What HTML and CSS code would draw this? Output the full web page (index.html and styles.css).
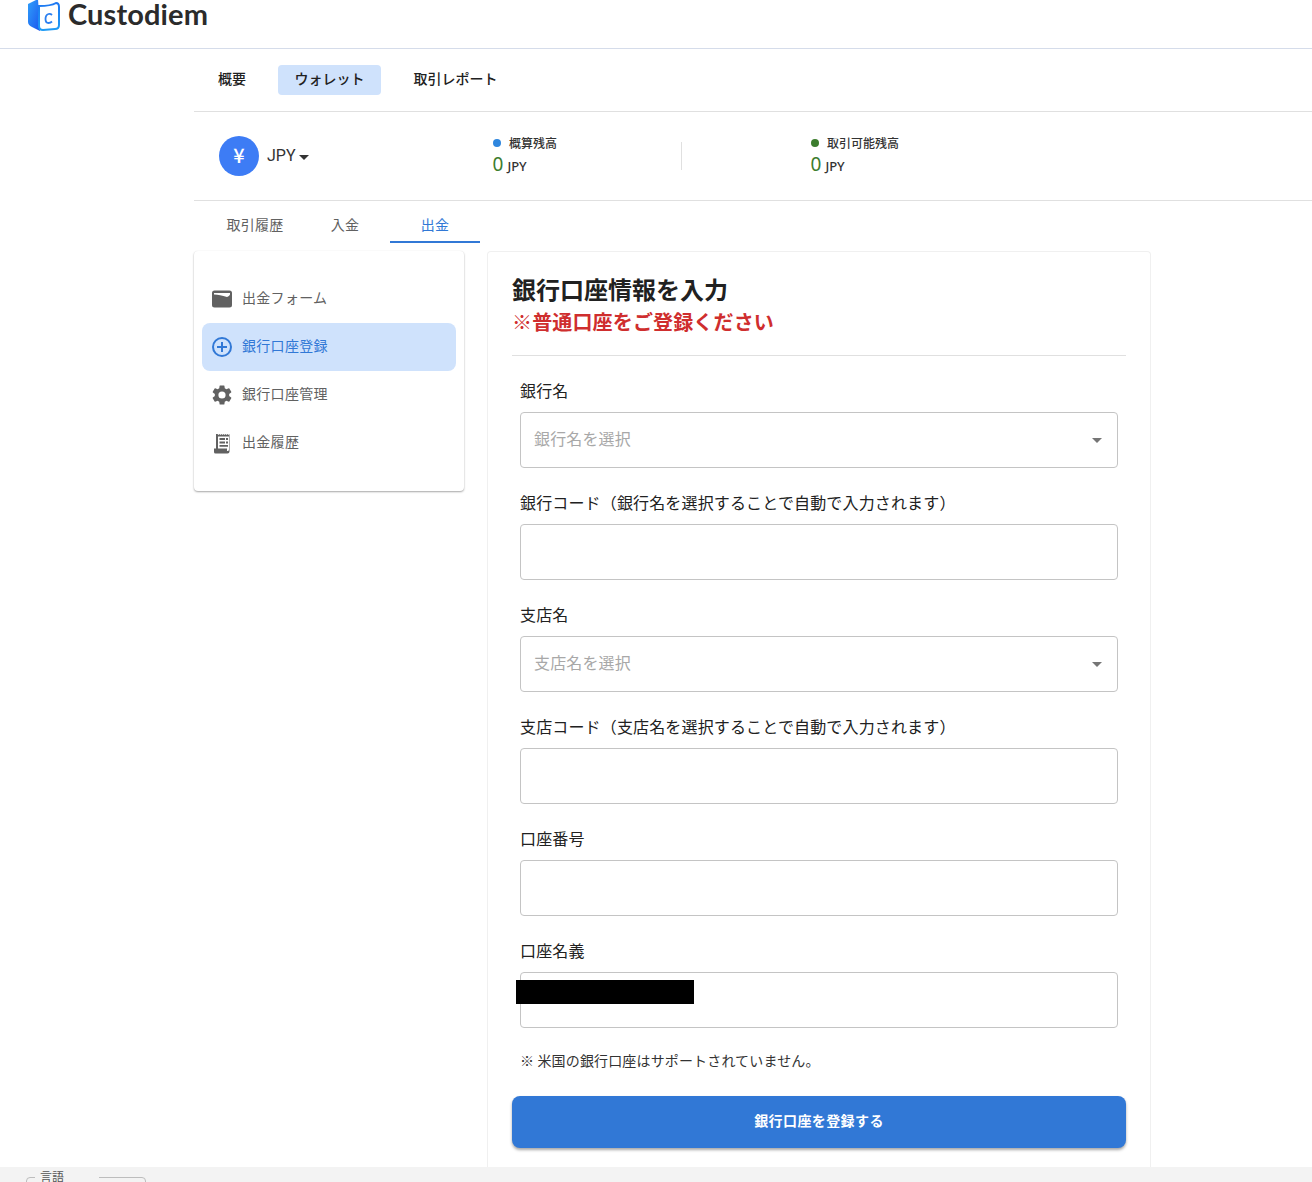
FILE: index.html
```html
<!DOCTYPE html>
<html lang="ja">
<head>
<meta charset="utf-8">
<title>Custodiem</title>
<link rel="stylesheet" href="styles.css">
</head>
<body>
<div class="page">
  <header class="topbar">
    <svg class="logo-icon" width="34" height="36" viewBox="0 0 34 36">
      <defs>
        <linearGradient id="lg" x1="0" y1="0" x2="1" y2="1"><stop offset="0" stop-color="#2fa0fa"/><stop offset="1" stop-color="#1c55ee"/></linearGradient>
        <linearGradient id="lh" x1="0" y1="0" x2="0" y2="1"><stop offset="0" stop-color="#1e78f2"/><stop offset="1" stop-color="#1d9bf5"/></linearGradient>
      </defs>
      <path d="M1 8 L11 3 L13 35 L5 31 Q1 29 1 26 Z" fill="url(#lg)"/>
      <path d="M12 10 Q24 10 29 7 Q32 7 32 11 L32 29 Q32 33 28 33 L16 34 Q12 34 12 30 Z" fill="#fff" stroke="url(#lh)" stroke-width="2"/>
      <path d="M25 19 Q23.500 17.500 21.500 18 Q18.500 19 18.500 23 Q18.500 27 21.500 27 Q23.500 27 25 25.500" fill="none" stroke="#2b7ff0" stroke-width="1.800"/>
    </svg>
    <span class="logo-text">Custodiem</span>
  </header>
  <main class="content">
    <nav class="mainnav">
      <a class="mainnav-item">概要</a>
      <a class="mainnav-item active">ウォレット</a>
      <a class="mainnav-item">取引レポート</a>
    </nav>
    <section class="balance">
      <div class="currency">
        <span class="coin">¥</span>
        <span class="code">JPY</span>
        <span class="caret"></span>
      </div>
      <div class="stat first">
        <div class="stat-label"><i class="dot blue"></i>概算残高</div>
        <div class="stat-value"><b>0</b><span>JPY</span></div>
      </div>
      <div class="stat second">
        <div class="stat-label"><i class="dot green"></i>取引可能残高</div>
        <div class="stat-value"><b>0</b><span>JPY</span></div>
      </div>
    </section>
    <nav class="tabs">
      <a class="tab">取引履歴</a>
      <a class="tab">入金</a>
      <a class="tab active">出金</a>
    </nav>
    <div class="columns">
      <aside class="side">
        <a class="side-item">
          <svg viewBox="0 0 24 24" width="24" height="24"><path fill="#616161" fill-rule="evenodd" d="M4.500 3.500h15A2.500 2.500 0 0 1 22 6v12a2.500 2.500 0 0 1-2.500 2.500h-15A2.500 2.500 0 0 1 2 18V6a2.500 2.500 0 0 1 2.500-2.500ZM4 6v1.500c4 .2 8 .7 13 2.500 1.500-.5 2.500-1.300 3-2.500V6H4Z"/></svg>
          <span>出金フォーム</span>
        </a>
        <a class="side-item active">
          <svg viewBox="0 0 24 24" width="24" height="24"><path fill="#3178d6" d="M13 7h-2v4H7v2h4v4h2v-4h4v-2h-4V7Zm-1-5a10 10 0 1 0 0 20 10 10 0 0 0 0-20Zm0 18a8 8 0 1 1 0-16 8 8 0 0 1 0 16Z"/></svg>
          <span>銀行口座登録</span>
        </a>
        <a class="side-item">
          <svg viewBox="0 0 24 24" width="24" height="24"><path fill="#616161" d="M19.140 12.940c.04-.300.06-.610.06-.940 0-.320-.02-.640-.07-.940l2.030-1.580a.49.49 0 0 0 .12-.610l-1.920-3.320a.49.49 0 0 0-.59-.220l-2.390.960a7 7 0 0 0-1.620-.940l-.360-2.540a.48.48 0 0 0-.480-.410h-3.840a.47.47 0 0 0-.470.410l-.360 2.540a7.300 7.300 0 0 0-1.620.940l-2.390-.960a.49.49 0 0 0-.590.220L2.740 8.870a.48.48 0 0 0 .120.610l2.030 1.580c-.050.300-.090.630-.090.940s.020.640.07.940l-2.030 1.580a.49.49 0 0 0-.120.610l1.920 3.320c.120.220.370.290.590.220l2.390-.960c.500.380 1.030.700 1.620.940l.360 2.540c.050.240.240.410.480.410h3.840c.240 0 .440-.170.470-.410l.360-2.540a7 7 0 0 0 1.620-.940l2.390.960c.220.080.470 0 .590-.220l1.920-3.320a.47.47 0 0 0-.120-.610l-2.010-1.580ZM12 15.600a3.600 3.600 0 1 1 0-7.200 3.600 3.600 0 0 1 0 7.200Z"/></svg>
          <span>銀行口座管理</span>
        </a>
        <a class="side-item">
          <svg viewBox="0 0 24 24" width="24" height="24"><path fill="#616161" fill-rule="evenodd" d="M6 3h1.500l1 1 1-1 1 1 1-1 1 1 1-1 1 1 1-1 1 1 1-1 1 1 1-1V20.500a2 2 0 0 1-2 2H5.500a1.500 1.500 0 0 1-1.500-1.500V17.500h2V3Zm2 2.500v12h9v2.500h.5A1.500 1.500 0 0 0 19 18.500V5.500H8Zm1.500 1.500h5.500v2h-5.500V7Zm6.500 0h2v2h-2V7Zm-6.500 3.500h5.500v2h-5.500v-2Zm6.500 0h2v2h-2v-2Zm-6.500 3.500h8.500v1.800H9.500V14Z"/></svg>
          <span>出金履歴</span>
        </a>
      </aside>
      <section class="panel">
        <header class="panel-head">
          <h1>銀行口座情報を入力</h1>
          <p class="warn">※普通口座をご登録ください</p>
        </header>
        <form class="form">
          <div class="field">
            <label>銀行名</label>
            <div class="box select"><span class="placeholder">銀行名を選択</span><i class="select-caret"></i></div>
          </div>
          <div class="field">
            <label>銀行コード（銀行名を選択することで自動で入力されます）</label>
            <div class="box"></div>
          </div>
          <div class="field">
            <label>支店名</label>
            <div class="box select"><span class="placeholder">支店名を選択</span><i class="select-caret"></i></div>
          </div>
          <div class="field">
            <label>支店コード（支店名を選択することで自動で入力されます）</label>
            <div class="box"></div>
          </div>
          <div class="field">
            <label>口座番号</label>
            <div class="box"></div>
          </div>
          <div class="field">
            <label>口座名義</label>
            <div class="box"></div>
            <div class="redact"></div>
          </div>
          <p class="note">※ 米国の銀行口座はサポートされていません。</p>
        </form>
        <button class="submit" type="button">銀行口座を登録する</button>
      </section>
    </div>
  </main>
  <footer class="footer">
    <fieldset class="lang"><legend>言語</legend></fieldset>
  </footer>
</div>
</body>
</html>
```
FILE: styles.css
```css
* { box-sizing: border-box; }
html, body { margin: 0; padding: 0; height: 1182px; overflow: hidden; background: #fff; }
body { font-family: "Noto Sans CJK JP", "Noto Sans", sans-serif; color: #212121; }
.page { height: 1182px; display: flex; flex-direction: column; overflow: hidden; }
a { display: block; }

.topbar { height: 49px; flex: none; border-bottom: 1px solid #d5dcea; display: flex; align-items: flex-start; padding-left: 27px; overflow: hidden; }
.logo-icon { margin-top: -4px; flex: none; }
.logo-text { margin-left: 7px; font-family: "Lato", sans-serif; font-size: 29px; line-height: 28px; font-weight: 700; color: #2b2b2b; letter-spacing: .12px; }

.content { flex: 1; min-height: 0; margin-left: 194px; }

.mainnav { height: 63px; border-bottom: 1px solid #e0e0e0; display: flex; align-items: flex-start; padding: 16px 0 0 8px; gap: 16px; }
.mainnav-item { height: 30px; line-height: 26px; font-size: 14px; font-weight: 500; padding: 0 16.500px; border-radius: 4px; color: #212121; }
.mainnav-item:first-child { padding: 0 16px; }
.mainnav-item.active { background: #cfe2fc; }

.balance { height: 89px; border-bottom: 1px solid #e0e0e0; display: flex; align-items: center; }
.currency { display: flex; align-items: center; margin-left: 25px; width: 274px; flex: none; height: 40px; }
.coin { width: 40px; height: 40px; border-radius: 50%; background: #3d7cf5; color: #fff; font-size: 20px; font-weight: 500; text-align: center; line-height: 38px; }
.code { margin-left: 8px; margin-top: -2px; font-size: 16px; color: #333; font-family: "Roboto", sans-serif; }
.caret { margin-left: 3px; margin-top: 3px; border: 5px solid transparent; border-top-color: #333; border-bottom: 0; }
.stat { height: 56px; padding-top: 7px; }
.stat.first { width: 189px; position: relative; }
.stat.first::after { content: ""; position: absolute; right: 0; top: 14px; height: 28px; width: 1px; background: #e0e0e0; }
.stat.second { margin-left: 129px; }
.stat-label { display: flex; align-items: center; font-size: 12px; line-height: 16px; font-weight: 500; color: #333; }
.dot { width: 8px; height: 8px; border-radius: 50%; margin-right: 8px; margin-top: -1px; }
.dot.blue { background: #2e86de; }
.dot.green { background: #3c7d2e; }
.stat-value { display: flex; align-items: baseline; margin-top: 1px; line-height: 24px; }
.stat-value b { font-family: "Noto Sans", sans-serif; font-weight: 400; font-size: 19px; color: #3c7d2e; margin-left: -.5px; }
.stat-value span { font-family: "Noto Sans", sans-serif; font-size: 13px; margin-left: 4px; font-weight: 500; color: #333; }

.tabs { height: 42px; display: flex; }
.tab { width: 90px; height: 42px; text-align: center; font-size: 14px; line-height: 46px; color: #616161; letter-spacing: .2px; }
.tab:first-child { width: 106px; padding-left: 16px; }
.tab.active { color: #3178d6; border-bottom: 2px solid #3178d6; }

.columns { display: flex; align-items: flex-start; margin-top: 8px; gap: 23px; }
.side { width: 270px; height: 240px; padding: 24px 8px; background: #fff; border-radius: 4px; box-shadow: 0 1px 2px rgba(0,0,0,.35), 0 0 1px rgba(0,0,0,.06); flex: none; }
.side-item { height: 48px; display: flex; align-items: center; padding-left: 8px; gap: 8px; border-radius: 8px; font-size: 14px; line-height: 20px; color: #616161; letter-spacing: .3px; }
.side-item span { margin-top: -4px; }
.side-item svg { flex: none; margin-top: -1px; }
.side-item.active { background: #cfe2fc; color: #3178d6; }

.panel { width: 664px; height: 916px; padding: 22px 24px 0; border: 1px solid #f0f0f0; border-bottom: 0; border-radius: 4px 4px 0 0; background: #fff; flex: none; }
.panel-head { height: 82px; border-bottom: 1px solid #e0e0e0; }
.panel-head h1 { margin: 0; font-size: 24px; line-height: 30px; font-weight: 700; color: #212121; }
.warn { margin: 3px 0 0; font-size: 20px; line-height: 30px; font-weight: 700; color: #cf2e2e; letter-spacing: .15px; }

.form { padding: 0 8px; }
.field { height: 112px; padding-top: 24px; position: relative; }
.field label { display: block; height: 32px; font-size: 16px; line-height: 20px; color: #212121; letter-spacing: .15px; }
.box { height: 56px; border: 1px solid #c4c4c4; border-radius: 4px; display: flex; align-items: center; justify-content: space-between; padding: 0 15px 0 13px; background: #fff; }
.placeholder { font-size: 16px; line-height: 20px; margin-top: -4px; color: #a8a8a8; letter-spacing: .15px; }
.select-caret { border: 5px solid transparent; border-top-color: #757575; border-bottom: 0; }
.redact { position: absolute; left: -4px; top: 64px; width: 178px; height: 24px; background: #000; }
.note { margin: 0; padding-top: 21px; height: 56px; font-size: 14px; line-height: 22px; color: #333; letter-spacing: .15px; }
.submit { display: block; width: 614px; height: 52px; margin: 12px 0 0; padding: 0 0 5px; border: 0; border-radius: 8px; background: #3178d6; color: #fff; font-family: inherit; font-size: 14px; font-weight: 700; letter-spacing: .4px; box-shadow: 0 2px 3px rgba(0,0,0,.35); }

.footer { height: 15px; flex: none; background: #f3f3f3; overflow: hidden; padding: 3px 0 0 26px; }
.lang { margin: 0; padding: 0 0 0 8px; width: 120px; height: 40px; border: 1px solid #bdbdbd; border-radius: 4px; }
.lang legend { padding: 0 5px; font-size: 12px; line-height: 14px; color: #555; width: 64px; }
```
